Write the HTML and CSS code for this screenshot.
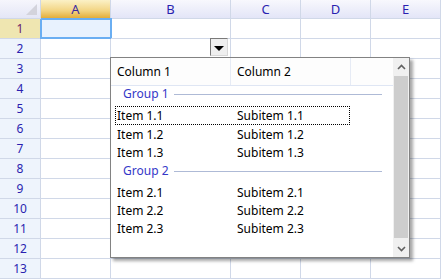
FILE: index.html
```html
<!DOCTYPE html>
<html lang="en">

<head>
    <meta charset="UTF-8">
    <title>Grid with dropdown</title>
    <link rel="stylesheet" href="styles.css">
</head>

<body>
    <div class="sheet">
        <div class="grid">
            <div class="corner"><span class="corner-tri"></span></div>
            <div class="col-head active">A</div>
            <div class="col-head">B</div>
            <div class="col-head">C</div>
            <div class="col-head">D</div>
            <div class="col-head">E</div>

            <div class="row-head active">1</div>
            <div class="cell selected"></div><div class="cell"></div><div class="cell"></div><div class="cell"></div><div class="cell"></div>
            <div class="row-head">2</div>
            <div class="cell"></div><div class="cell"></div><div class="cell"></div><div class="cell"></div><div class="cell"></div>
            <div class="row-head">3</div>
            <div class="cell"></div><div class="cell"></div><div class="cell"></div><div class="cell"></div><div class="cell"></div>
            <div class="row-head">4</div>
            <div class="cell"></div><div class="cell"></div><div class="cell"></div><div class="cell"></div><div class="cell"></div>
            <div class="row-head">5</div>
            <div class="cell"></div><div class="cell"></div><div class="cell"></div><div class="cell"></div><div class="cell"></div>
            <div class="row-head">6</div>
            <div class="cell"></div><div class="cell"></div><div class="cell"></div><div class="cell"></div><div class="cell"></div>
            <div class="row-head">7</div>
            <div class="cell"></div><div class="cell"></div><div class="cell"></div><div class="cell"></div><div class="cell"></div>
            <div class="row-head">8</div>
            <div class="cell"></div><div class="cell"></div><div class="cell"></div><div class="cell"></div><div class="cell"></div>
            <div class="row-head">9</div>
            <div class="cell"></div><div class="cell"></div><div class="cell"></div><div class="cell"></div><div class="cell"></div>
            <div class="row-head">10</div>
            <div class="cell"></div><div class="cell"></div><div class="cell"></div><div class="cell"></div><div class="cell"></div>
            <div class="row-head">11</div>
            <div class="cell"></div><div class="cell"></div><div class="cell"></div><div class="cell"></div><div class="cell"></div>
            <div class="row-head">12</div>
            <div class="cell"></div><div class="cell"></div><div class="cell"></div><div class="cell"></div><div class="cell"></div>
            <div class="row-head">13</div>
            <div class="cell"></div><div class="cell"></div><div class="cell"></div><div class="cell"></div><div class="cell"></div>
        </div>

        <!-- dropdown button in B2 -->
        <div class="drop-btn"><span class="drop-arrow"></span></div>

        <!-- popup list -->
        <div class="popup">
            <div class="popup-list">
                <div class="list-head">
                    <div class="hcol first">Column 1</div>
                    <div class="hcol second">Column 2</div>
                    <div class="hcol rest"></div>
                </div>
                <div class="group"><span>Group 1</span><i class="group-line"></i></div>
                <div class="item focused"><span class="c1">Item 1.1</span><span class="c2">Subitem 1.1</span></div>
                <div class="item"><span class="c1">Item 1.2</span><span class="c2">Subitem 1.2</span></div>
                <div class="item"><span class="c1">Item 1.3</span><span class="c2">Subitem 1.3</span></div>
                <div class="group g2"><span>Group 2</span><i class="group-line"></i></div>
                <div class="item"><span class="c1">Item 2.1</span><span class="c2">Subitem 2.1</span></div>
                <div class="item"><span class="c1">Item 2.2</span><span class="c2">Subitem 2.2</span></div>
                <div class="item"><span class="c1">Item 2.3</span><span class="c2">Subitem 2.3</span></div>
            </div>
            <div class="scrollbar">
                <div class="sb-btn">
                    <svg width="9" height="6" viewBox="0 0 9 6"><path d="M1 5 L4.5 1.5 L8 5" fill="none" stroke="#606060" stroke-width="1.6"/></svg>
                </div>
                <div class="sb-track"><div class="sb-thumb"></div></div>
                <div class="sb-btn">
                    <svg width="9" height="6" viewBox="0 0 9 6"><path d="M1 1 L4.5 4.5 L8 1" fill="none" stroke="#606060" stroke-width="1.6"/></svg>
                </div>
            </div>
        </div>
    </div>
</body>

</html>
```

FILE: styles.css
```css
body {
    margin: 0;
    background-color: #ffffff;
    font-family: "Noto Sans", "Open Sans", sans-serif;
    font-size: 12px;
}

.sheet {
    position: relative;
    width: 441px;
    height: 279px;
    overflow: hidden;
}

.grid {
    display: grid;
    grid-template-columns: 41px 70px 120px 70px 70px 70px;
    grid-template-rows: 19px repeat(13, 20px);
}

.grid > div {
    box-sizing: border-box;
    border-right: 1px solid #d0d8e8;
    border-bottom: 1px solid #d0d8e8;
}

.corner {
    position: relative;
    background: linear-gradient(#f6f6fc, #e4e6f6);
}

.corner-tri {
    position: absolute;
    right: 3px;
    bottom: 3px;
    width: 0;
    height: 0;
    border-left: 11px solid transparent;
    border-bottom: 11px solid #d3d3dc;
}

.col-head {
    background: linear-gradient(#f8f8fd, #e3e5f7);
    color: #2a1fb0;
    text-align: center;
    line-height: 18px;
    font-size: 13px;
}

.col-head.active {
    background: linear-gradient(#fbf1c6, #f2d482 60%, #e3ad3a);
    color: #3a2aa0;
}

.row-head {
    background-color: #eef4fc;
    color: #2a1fb0;
    text-align: center;
    line-height: 19px;
    font-size: 12px;
}

.row-head.active {
    background-color: #efe6b1;
    color: #6a1a6a;
}

.grid > .cell.selected {
    background-color: #e8f2fe;
    border: 2px solid #6aaef2;
    margin: -1px 0 0 -1px;
    width: 72px;
    height: 21px;
}

.drop-btn {
    position: absolute;
    left: 210px;
    top: 38px;
    width: 18px;
    height: 18px;
    box-sizing: border-box;
    background-color: #efefef;
    border-top: 1px solid #7a7a7a;
    border-left: 1px solid #7a7a7a;
    border-right: 1px solid #d8d8d8;
    border-bottom: 1px solid #d8d8d8;
    display: flex;
    align-items: center;
    justify-content: center;
}

.drop-arrow {
    width: 0;
    height: 0;
    margin-top: 2px;
    border-left: 5px solid transparent;
    border-right: 5px solid transparent;
    border-top: 5px solid #000000;
}

.popup {
    position: absolute;
    left: 110px;
    top: 57px;
    width: 300px;
    height: 201px;
    box-sizing: border-box;
    background-color: #ffffff;
    border: 1px solid #828282;
    box-shadow: 3px 3px 3px rgba(0, 0, 0, 0.35);
    display: flex;
}

.popup-list {
    flex: 1;
    color: #000000;
}

.list-head {
    display: flex;
    height: 27px;
    border-bottom: 1px solid #dfe6f4;
    background-color: #fdfdfd;
}

.hcol {
    box-sizing: border-box;
    line-height: 27px;
    padding-left: 6px;
    border-right: 1px solid #e6ebf5;
}

.hcol.first {
    width: 120px;
}

.hcol.second {
    width: 120px;
}

.hcol.rest {
    flex: 1;
    border-right: none;
}

.group {
    display: flex;
    align-items: center;
    box-sizing: border-box;
    height: 20px;
    padding-left: 12px;
    padding-bottom: 5px;
    color: #3438c8;
}

.group.g2 {
    margin-top: 2px;
}

.group-line {
    flex: 1;
    height: 1px;
    margin: 1px 11px 0 5px;
    background-color: #aebad6;
}

.item {
    display: flex;
    height: 18px;
    line-height: 18px;
    margin-left: 4px;
    width: 235px;
    box-sizing: border-box;
    border: 1px solid transparent;
}

.item.focused {
    border: 1px dotted #000000;
    height: 19px;
}

.c1 {
    width: 120px;
    padding-left: 1px;
}

.c2 {
    flex: 1;
}

.scrollbar {
    width: 16px;
    background-color: #f0f0f0;
    display: flex;
    flex-direction: column;
}

.sb-btn {
    height: 17px;
    display: flex;
    align-items: center;
    justify-content: center;
}

.sb-track {
    flex: 1;
    padding: 1px 1px;
    display: flex;
}

.sb-thumb {
    flex: 1;
    margin-bottom: 1px;
    background-color: #cdcdcd;
}
```
